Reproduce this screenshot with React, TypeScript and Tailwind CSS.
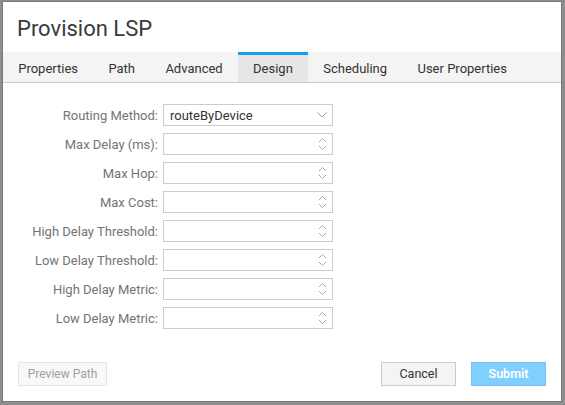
import React, { useState } from 'react';

const tabs = ['Properties', 'Path', 'Advanced', 'Design', 'Scheduling', 'User Properties'];

const numberFields = [
  'Max Delay (ms):',
  'Max Hop:',
  'Max Cost:',
  'High Delay Threshold:',
  'Low Delay Threshold:',
  'High Delay Metric:',
  'Low Delay Metric:',
];

const Spinner: React.FC = () => (
  <svg width="9" height="14" viewBox="0 0 9 14" fill="none" className="text-[#a8a8a8]">
    <path d="M1 5 L4.5 1.5 L8 5" stroke="currentColor" strokeWidth="1" />
    <path d="M1 9 L4.5 12.5 L8 9" stroke="currentColor" strokeWidth="1" />
  </svg>
);

const Row: React.FC<{ label: string; children: React.ReactNode }> = ({ label, children }) => (
  <div className="flex items-center h-[22px]">
    <span className="w-[155px] text-right text-[13px] text-[#747474] leading-none">
      {label}
    </span>
    <div className="ml-[5px] w-[170px] h-[22px]">{children}</div>
  </div>
);

export default function App() {
  const [active, setActive] = useState('Design');

  return (
    <div
      className="w-[565px] h-[405px] bg-[#8d8d8d] pl-[3px] pt-[2px]"
      style={{ fontFamily: 'Roboto, "Liberation Sans", Arial, sans-serif' }}
    >
      <div className="w-[558px] h-[399px] bg-white flex flex-col shadow-[0_0_0_1px_#7a7a7a]">
        {/* titre */}
        <div className="h-[50px] px-[14px] pt-[15px]">
          <h1 className="text-[22px] leading-[24px] text-[#3a3a3a]">Provision LSP</h1>
        </div>

        {/* onglets */}
        <div className="h-[31px] bg-[#f4f4f4] border-b border-[#cccccc] flex">
          {tabs.map((t) => (
            <button
              key={t}
              type="button"
              onClick={() => setActive(t)}
              className={
                t === active
                  ? 'h-[30px] px-[15.2px] pt-[1px] text-[13px] text-[#333333] bg-[#e6e6e6] border-t-[3px] border-[#1a9cf0]'
                  : 'h-[30px] px-[15.2px] pt-[4px] text-[13px] text-[#333333]'
              }
            >
              {t}
            </button>
          ))}
        </div>

        {/* formulaire */}
        <div className="flex flex-col gap-[7px] pt-[21px]">
          <Row label="Routing Method:">
            <div className="h-full border border-[#cccccc] flex items-center justify-between pl-[6px] pr-[5px]">
              <span className="text-[13px] text-[#333333] leading-none">routeByDevice</span>
              <svg width="10" height="6" viewBox="0 0 10 6" fill="none" className="text-[#9a9a9a]">
                <path d="M0.5 0.5 L5 5 L9.5 0.5" stroke="currentColor" strokeWidth="1" />
              </svg>
            </div>
          </Row>
          {numberFields.map((f) => (
            <Row key={f} label={f}>
              <div className="h-full border border-[#cccccc] flex items-center justify-end pr-[5px]">
                <Spinner />
              </div>
            </Row>
          ))}
        </div>

        {/* rodapé */}
        <div className="mt-auto flex items-center px-[15px] pb-[15px]">
          <button
            type="button"
            className="w-[89px] h-[24px] bg-[#f8f8f8] border border-[#e6e6e6] text-[12px] text-[#a0a0a0]"
          >
            Preview Path
          </button>
          <button
            type="button"
            className="ml-auto w-[75px] h-[24px] bg-[#f4f4f4] border border-[#cccccc] text-[12.5px] text-[#333333]"
          >
            Cancel
          </button>
          <button
            type="button"
            className="ml-[15px] w-[75px] h-[24px] bg-[#80cfff] border border-[#70c4f5] text-[12.5px] font-semibold text-white"
          >
            Submit
          </button>
        </div>
      </div>
    </div>
  );
}
